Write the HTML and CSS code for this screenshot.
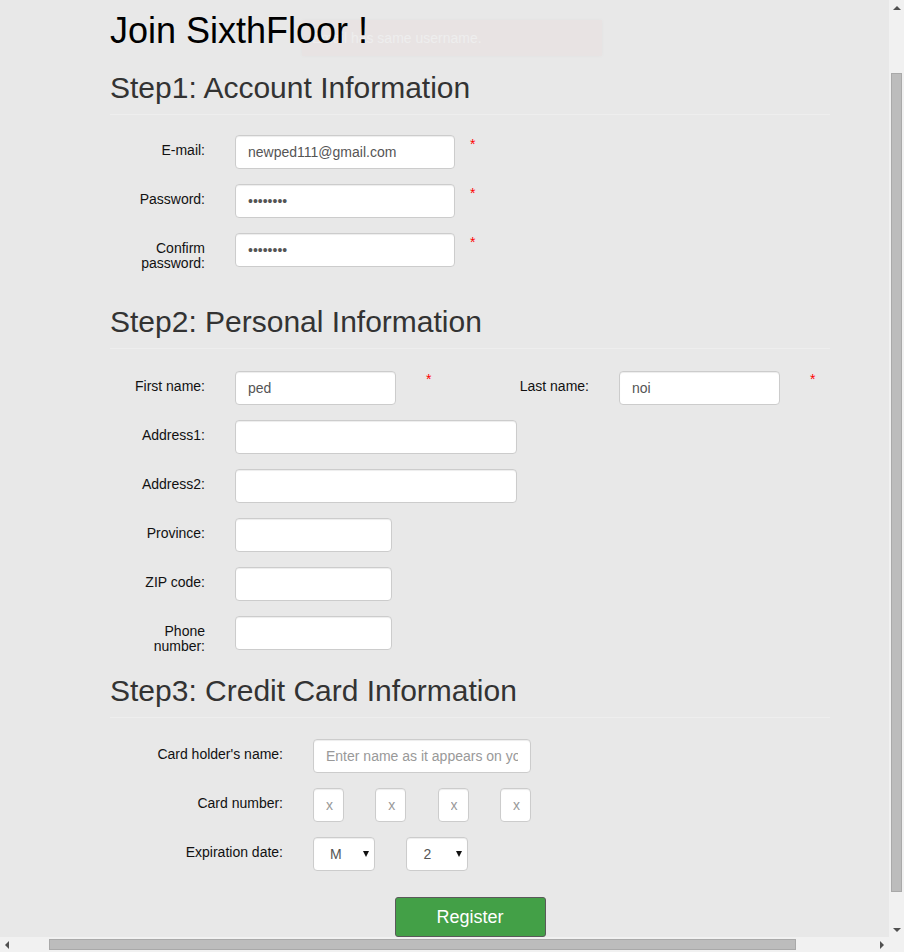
FILE: index.html
```html
<!DOCTYPE html>
<html lang="en">
<head>
<meta charset="utf-8">
<title>Join SixthFloor</title>
<link rel="stylesheet" href="styles.css">
</head>
<body>
<div class="page">
  <h1 class="title">Join SixthFloor !</h1>
  <div class="alert">Email has same username.</div>

  <h2 class="step step1">Step1: Account Information</h2>
  <div class="row">
    <label class="lbl">E-mail:</label>
    <input class="input w220" type="text" value="newped111@gmail.com">
    <span class="req">*</span>
  </div>
  <div class="row">
    <label class="lbl">Password:</label>
    <input class="input w220" type="password" value="password">
    <span class="req">*</span>
  </div>
  <div class="row">
    <label class="lbl">Confirm<br>password:</label>
    <input class="input w220" type="password" value="password">
    <span class="req">*</span>
  </div>

  <h2 class="step step2">Step2: Personal Information</h2>
  <div class="row">
    <label class="lbl">First name:</label>
    <input class="input w161" type="text" value="ped">
    <span class="req req-wide">*</span>
    <label class="lbl lbl-last">Last name:</label>
    <input class="input w161" type="text" value="noi">
    <span class="req req-wide">*</span>
  </div>
  <div class="row">
    <label class="lbl">Address1:</label>
    <input class="input w282" type="text">
  </div>
  <div class="row">
    <label class="lbl">Address2:</label>
    <input class="input w282" type="text">
  </div>
  <div class="row">
    <label class="lbl">Province:</label>
    <input class="input w157" type="text">
  </div>
  <div class="row">
    <label class="lbl">ZIP code:</label>
    <input class="input w157" type="text">
  </div>
  <div class="row">
    <label class="lbl">Phone<br>number:</label>
    <input class="input w157" type="text">
  </div>

  <h2 class="step step3">Step3: Credit Card Information</h2>
  <div class="row">
    <label class="lbl lbl-w">Card holder's name:</label>
    <input class="input w218" type="text" placeholder="Enter name as it appears on your card">
  </div>
  <div class="row">
    <label class="lbl lbl-w">Card number:</label>
    <div class="cards">
      <input class="input w31" type="text" placeholder="x">
      <input class="input w31" type="text" placeholder="x">
      <input class="input w31" type="text" placeholder="x">
      <input class="input w31" type="text" placeholder="x">
    </div>
  </div>
  <div class="row">
    <label class="lbl lbl-w">Expiration date:</label>
    <div class="selects">
      <div class="sel-wrap">
        <select class="sel"><option>M</option></select>
        <span class="caret"></span>
      </div>
      <div class="sel-wrap">
        <select class="sel"><option>2</option></select>
        <span class="caret"></span>
      </div>
    </div>
  </div>

  <button class="register" type="button">Register</button>
</div>

<div class="vscroll">
  <span class="arrow-up"></span>
  <span class="vthumb"></span>
  <span class="arrow-down"></span>
</div>
<div class="hscroll">
  <span class="arrow-left"></span>
  <span class="hthumb"></span>
  <span class="arrow-right"></span>
</div>
</body>
</html>
```

FILE: styles.css
```css
* {
  box-sizing: border-box;
}

body {
  margin: 0;
  height: 952px;
  overflow: hidden;
  background: #e8e8e8;
  font-family: "Liberation Sans", Arial, sans-serif;
  font-size: 14px;
  color: #333;
}

.page {
  position: relative;
  width: 720px;
  margin-left: 110px;
  padding-top: 11px;
}

.title {
  position: relative;
  z-index: 1;
  margin: 0;
  font-size: 36px;
  line-height: 40px;
  font-weight: 400;
  color: #000;
}

.alert {
  position: absolute;
  left: 192px;
  top: 20px;
  width: 300px;
  height: 36px;
  padding: 8px 10px;
  line-height: 20px;
  background: #e8e3e3;
  color: #eeeeee;
  box-shadow: 0 0 4px rgba(0, 0, 0, 0.03);
}

.step {
  margin: 20px 0 20px;
  padding-bottom: 10px;
  font-size: 30px;
  line-height: 33px;
  font-weight: 400;
  color: #333;
  border-bottom: 1px solid #eeeeee;
}

.step2 {
  margin-top: 34px;
  margin-bottom: 22px;
}

.step3 {
  margin-top: 20px;
  margin-bottom: 21px;
}

.row {
  display: flex;
  align-items: flex-start;
  margin-bottom: 15px;
}

.lbl {
  flex: none;
  width: 95px;
  margin-right: 30px;
  padding-top: 8px;
  text-align: right;
  line-height: 15px;
  color: #111;
}

.lbl-w {
  width: 173px;
}

.lbl-last {
  margin-left: 60px;
}

.input {
  flex: none;
  height: 34px;
  padding: 6px 12px;
  font-family: "Liberation Sans", Arial, sans-serif;
  font-size: 14px;
  line-height: 20px;
  color: #555;
  background: #fff;
  border: 1px solid #ccc;
  border-radius: 4px;
  box-shadow: inset 0 1px 1px rgba(0, 0, 0, 0.075);
  outline: none;
}

.input::placeholder {
  color: #999;
}

.w220 { width: 220px; }
.w161 { width: 161px; }
.w282 { width: 282px; }
.w157 { width: 157px; }
.w218 { width: 218px; }

.w31 {
  width: 31px;
  padding-right: 0;
}

.req {
  flex: none;
  width: 8px;
  margin-left: 15px;
  margin-top: 2px;
  font-size: 14px;
  line-height: 14px;
  color: #ff0000;
}

.req-wide {
  margin-left: 30px;
  margin-top: 1px;
}

.cards {
  display: flex;
  gap: 31.3px;
}

.selects {
  display: flex;
  gap: 31.4px;
}

.sel-wrap {
  position: relative;
  width: 62px;
  height: 34px;
}

.sel {
  appearance: none;
  -webkit-appearance: none;
  width: 62px;
  height: 34px;
  padding: 0 0 0 16px;
  font-family: "Liberation Sans", Arial, sans-serif;
  font-size: 14px;
  color: #555;
  background: #fff;
  border: 1px solid #ccc;
  border-radius: 4px;
  box-shadow: inset 0 1px 1px rgba(0, 0, 0, 0.075);
  outline: none;
}

.caret {
  position: absolute;
  left: 50px;
  top: 14px;
  width: 0;
  height: 0;
  border-left: 3px solid transparent;
  border-right: 3px solid transparent;
  border-top: 6px solid #111;
}

.register {
  display: block;
  width: 151px;
  height: 40px;
  margin: 26px auto 0;
  padding: 0;
  font-family: "Liberation Sans", Arial, sans-serif;
  font-size: 18px;
  line-height: 38px;
  color: #fff;
  background: #43a047;
  border: 1px solid #5a5a5a;
  border-radius: 3px;
}

/* fake browser scrollbars */
.vscroll {
  position: fixed;
  top: 0;
  right: 0;
  width: 15px;
  height: 937px;
  background: #f1f1f1;
  display: flex;
  flex-direction: column;
  align-items: center;
}

.arrow-up {
  margin-top: 6px;
  width: 0;
  height: 0;
  border-left: 4px solid transparent;
  border-right: 4px solid transparent;
  border-bottom: 4px solid #505050;
}

.vthumb {
  margin-top: 63px;
  width: 11px;
  height: 819px;
  background: #bcbcbc;
  border: 1px solid #a9a9a9;
}

.arrow-down {
  margin-top: auto;
  margin-bottom: 5px;
  width: 0;
  height: 0;
  border-left: 4px solid transparent;
  border-right: 4px solid transparent;
  border-top: 4px solid #505050;
}

.hscroll {
  position: fixed;
  left: 0;
  bottom: 0;
  width: 904px;
  height: 15px;
  padding-left: 5px;
  background: #f1f1f1;
  display: flex;
  align-items: center;
}

.arrow-left {
  width: 0;
  height: 0;
  border-top: 4px solid transparent;
  border-bottom: 4px solid transparent;
  border-right: 4px solid #505050;
}

.hthumb {
  margin-left: 40px;
  width: 747px;
  height: 11px;
  background: #bcbcbc;
  border: 1px solid #a9a9a9;
}

.arrow-right {
  margin-left: 84px;
  width: 0;
  height: 0;
  border-top: 4px solid transparent;
  border-bottom: 4px solid transparent;
  border-left: 4px solid #505050;
}
```
